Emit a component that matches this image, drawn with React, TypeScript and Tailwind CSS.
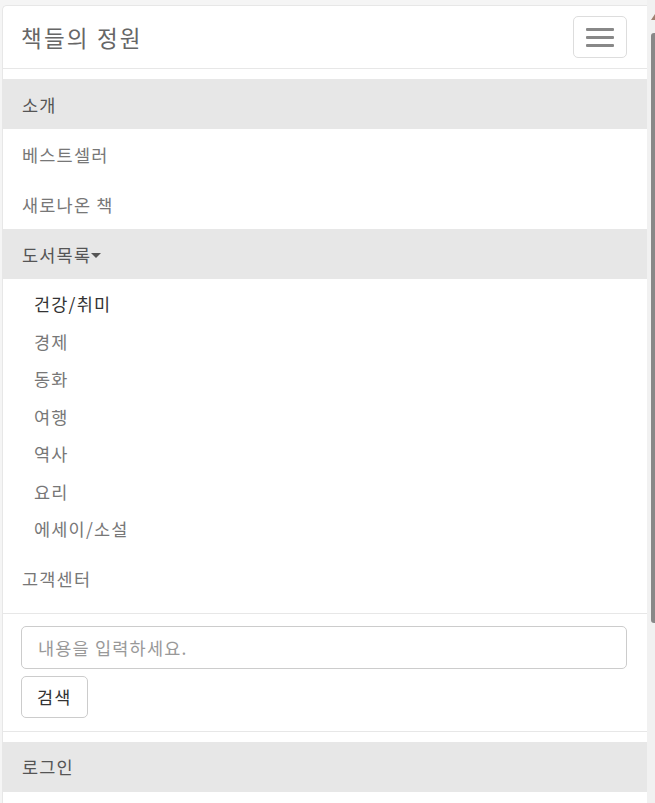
import React from 'react';

const menu = ['소개', '베스트셀러', '새로나온 책'];
const categories = ['건강/취미', '경제', '동화', '여행', '역사', '요리', '에세이/소설'];

function NavRow({ label, active, children }: { label: string; active?: boolean; children?: React.ReactNode }) {
  return (
    <li
      className={
        active
          ? 'h-[50px] flex items-center px-[19px] bg-[#e7e7e7] text-[#555]'
          : 'h-[50px] flex items-center px-[19px] text-[#777]'
      }
    >
      {label}
      {children}
    </li>
  );
}

export default function App() {
  return (
    <div className="h-[803px] w-[655px] overflow-hidden bg-[#f5f5f5] flex font-['Noto_Sans_CJK_KR','Noto_Sans',sans-serif] text-[17.5px] leading-[25px] tracking-[1.2px]">
      <div className="mt-[5px] ml-[2px] w-[645px] bg-white rounded-tl-[5px] border-l border-t border-[#e7e7e7]">
        {/* Header */}
        <div className="h-[63px] flex items-center justify-between pl-[18px] pr-[20px] border-b border-[#e7e7e7]">
          <span className="text-[22.5px] tracking-[2.2px] text-[#666]">책들의 정원</span>
          <button className="w-[54px] h-[42px] border border-[#ddd] rounded-[5px] flex flex-col items-center justify-center gap-[5px]">
            <span className="block w-[28px] h-[3px] rounded-[1px] bg-[#888]" />
            <span className="block w-[28px] h-[3px] rounded-[1px] bg-[#888]" />
            <span className="block w-[28px] h-[3px] rounded-[1px] bg-[#888]" />
          </button>
        </div>

        {/* Collapsed menu */}
        <ul className="pt-[10px] pb-[9px]">
          {menu.map((m, i) => (
            <NavRow key={m} label={m} active={i === 0} />
          ))}
          <NavRow label="도서목록" active>
            <span className="inline-block w-0 h-0 mt-[3px] border-t-[5px] border-x-[5px] border-x-transparent border-t-[#555]" />
          </NavRow>
          <li className="py-[6px]">
            {categories.map((c, i) => (
              <div
                key={c}
                className={
                  i === 0
                    ? 'h-[37.5px] flex items-center pl-[31px] text-[#333]'
                    : 'h-[37.5px] flex items-center pl-[31px] text-[#777]'
                }
              >
                {c}
              </div>
            ))}
          </li>
          <NavRow label="고객센터" />
        </ul>

        {/* Search form */}
        <div className="border-t border-b border-[#e7e7e7] px-[18px] pt-[12px] pb-[13px] flex flex-col gap-[7px]">
          <input
            className="w-[606px] h-[43px] border border-[#ccc] rounded-[5px] px-[16px] tracking-[1.2px] text-[#555] placeholder:text-[#999] outline-none"
            placeholder="내용을 입력하세요."
          />
          <button className="self-start h-[42px] px-[15px] border border-[#ccc] rounded-[5px] tracking-[1.2px] text-[#333] bg-white">
            검색
          </button>
        </div>

        <ul className="pt-[10px]">
          <NavRow label="로그인" active />
        </ul>
      </div>

      {/* Scrollbar */}
      <div className="flex-1 bg-[#f1f1f1] flex flex-col items-end pt-[14px]">
        <div className="w-0 h-0 border-b-[6px] border-l-[4px] border-l-transparent border-b-[#a08070]" />
        <div className="mt-[13px] w-[4px] h-[590px] bg-[#888] rounded-tl-[3px] rounded-bl-[3px]" />
      </div>
    </div>
  );
}
